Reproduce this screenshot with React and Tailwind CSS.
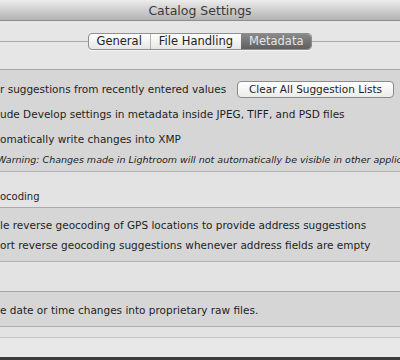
import React from "react";

const Segment = ({ label, active, last }) => (
  <div
    className={
      active
        ? "flex items-center px-[8px] h-full bg-gradient-to-b from-[#8a8a8a] to-[#5f5f5f] text-[#e6e6e6] rounded-r-[4px]"
        : "flex items-center px-[8px] h-full text-[#222] " + (last ? "" : "border-r border-[#b5b5b5]")
    }
  >
    {label}
  </div>
);

const Row = ({ children, className = "" }) => (
  <div className={"flex items-center whitespace-nowrap " + className}>{children}</div>
);

export default function App() {
  return (
    <div
      className="w-[400px] h-[360px] overflow-hidden flex flex-col bg-[#e4e4e4] text-[#1e1e1e]"
      style={{ fontFamily: '"DejaVu Sans", "Noto Sans", sans-serif' }}
    >
      {/* title bar */}
      <div className="h-[21px] shrink-0 flex items-center justify-center pt-[2px] bg-gradient-to-b from-[#ececec] to-[#b3b3b3] border-b border-[#8c8c8c] text-[12.5px] text-[#3b3b3b]">
        Catalog Settings
      </div>

      {/* tab strip */}
      <div className="h-[49px] shrink-0 pt-[12px] bg-[#e6e6e6] border-b border-[#a4a4a4]">
        <div className="h-[17px] flex items-center">
          <div className="flex-1 h-px bg-[#a9a9a9]" />
          <div className="h-[17px] flex text-[11.5px] rounded-[4px] border border-[#8e8e8e] bg-gradient-to-b from-[#ffffff] to-[#e6e6e6] shadow-[0_1px_0_rgba(255,255,255,0.6)]">
            <Segment label="General" />
            <Segment label="File Handling" last />
            <Segment label="Metadata" active />
          </div>
          <div className="flex-1 h-px bg-[#a9a9a9]" />
        </div>
      </div>

      {/* editing panel */}
      <div className="h-[102px] shrink-0 bg-[#d6d6d6] border-b border-[#b0b0b0] text-[10.5px] pt-[11px]">
        <Row className="h-[17px] justify-between pr-[6px]">
          <span>r suggestions from recently entered values</span>
          <button className="h-[17px] px-[11px] rounded-[4px] border border-[#8a8a8a] bg-gradient-to-b from-[#ffffff] to-[#ececec] text-[10.5px] text-[#1e1e1e]">
            Clear All Suggestion Lists
          </button>
        </Row>
        <Row className="h-[25px] mt-[4px]">ude Develop settings in metadata inside JPEG, TIFF, and PSD files</Row>
        <Row className="h-[25px]">omatically write changes into XMP</Row>
        <Row className="h-[16px] italic text-[9.5px] -ml-[3px]">
          Warning: Changes made in Lightroom will not automatically be visible in other applications
        </Row>
      </div>

      {/* geocoding header */}
      <div className="h-[36px] shrink-0 flex items-end pb-[3px] bg-[#e3e3e3] border-b border-[#ababab] text-[10px] whitespace-nowrap">
        ocoding
      </div>

      {/* geocoding panel */}
      <div className="h-[54px] shrink-0 bg-[#d6d6d6] border-b border-[#b0b0b0] text-[10.5px] pt-[8px]">
        <Row className="h-[20px]">le reverse geocoding of GPS locations to provide address suggestions</Row>
        <Row className="h-[20px]">ort reverse geocoding suggestions whenever address fields are empty</Row>
      </div>

      {/* exif header */}
      <div className="h-[30px] shrink-0 bg-[#e3e3e3] border-b border-[#a6a6a6]" />

      {/* exif panel */}
      <div className="h-[35px] shrink-0 flex items-center pt-[3px] bg-[#d6d6d6] border-b border-[#b0b0b0] text-[10.5px] whitespace-nowrap">
        e date or time changes into proprietary raw files.
      </div>

      <div className="h-[11px] shrink-0 bg-[#e3e3e3] border-b border-[#c4c4c4]" />
      <div className="flex-1 bg-[#e8e8e8] border-b-[3px] border-[#3c3c3c]" />
    </div>
  );
}
